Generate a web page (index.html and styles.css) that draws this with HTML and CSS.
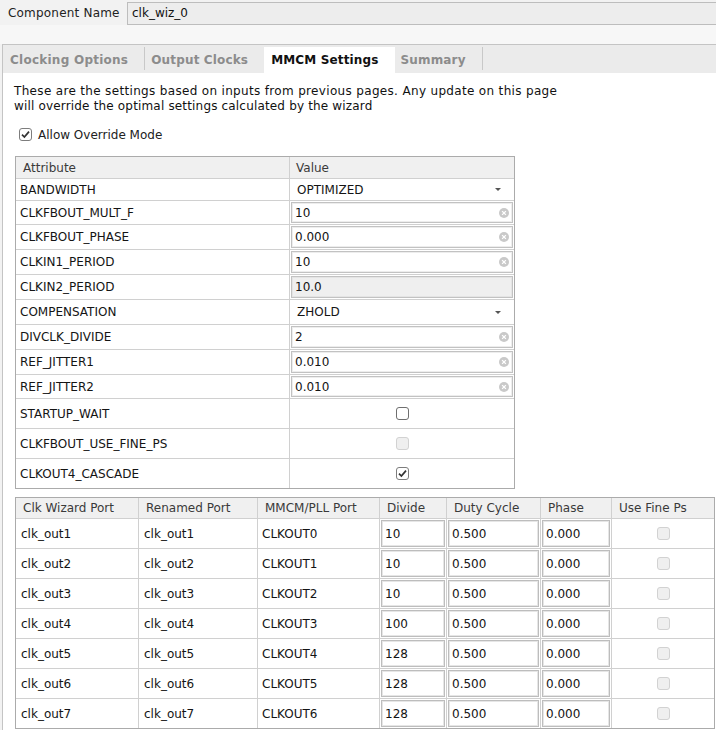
FILE: index.html
```html
<!DOCTYPE html>
<html>
<head>
<meta charset="utf-8">
<title>clk_wiz_0 - MMCM Settings</title>
<link rel="stylesheet" href="styles.css">
</head>
<body>
<div class="namebar">
  <span class="name-label">Component Name</span>
  <div class="name-input">clk_wiz_0</div>
</div>
<div class="band"></div>
<div class="pane">
  <div class="tabs">
    <div class="tab first">Clocking Options</div>
    <span class="tsep"></span>
    <div class="tab">Output Clocks</div>
    <div class="tab active">MMCM Settings</div>
    <div class="tab">Summary</div>
    <span class="tsep"></span>
  </div>
  <div class="panel">
    <p class="intro"><span class="l1">These are the settings based on inputs from previous pages. Any update on this page</span><br><span class="l2">will override the optimal settings calculated by the wizard</span></p>
    <label class="override">
      <svg class="cb" width="13" height="13" viewBox="0 0 13 13"><rect x="0.5" y="0.5" width="12" height="12" rx="2.5" fill="#fff" stroke="#7d7d7d"/><path d="M3 6.6l2.4 2.4 4.6-5.4" fill="none" stroke="#333" stroke-width="1.7"/></svg>
      <span>Allow Override Mode</span>
    </label>

    <div class="attr">
      <div class="arow head"><div class="ac1">Attribute</div><div class="ac2 hv">Value</div></div>
      <div class="arow h22"><div class="ac1">BANDWIDTH</div><div class="ac2"><div class="combo"><span>OPTIMIZED</span><span class="arrow"></span></div></div></div>
      <div class="arow h24"><div class="ac1">CLKFBOUT_MULT_F</div><div class="ac2"><div class="inp"><span>10</span><svg class="clr" width="10" height="10" viewBox="0 0 10 10"><circle cx="5" cy="5" r="5" fill="#c9c9c9"/><path d="M3.1 3.1l3.8 3.8M6.9 3.1l-3.8 3.8" stroke="#fff" stroke-width="1.3"/></svg></div></div></div>
      <div class="arow h25"><div class="ac1">CLKFBOUT_PHASE</div><div class="ac2"><div class="inp"><span>0.000</span><svg class="clr" width="10" height="10" viewBox="0 0 10 10"><circle cx="5" cy="5" r="5" fill="#c9c9c9"/><path d="M3.1 3.1l3.8 3.8M6.9 3.1l-3.8 3.8" stroke="#fff" stroke-width="1.3"/></svg></div></div></div>
      <div class="arow h25"><div class="ac1">CLKIN1_PERIOD</div><div class="ac2"><div class="inp"><span>10</span><svg class="clr" width="10" height="10" viewBox="0 0 10 10"><circle cx="5" cy="5" r="5" fill="#c9c9c9"/><path d="M3.1 3.1l3.8 3.8M6.9 3.1l-3.8 3.8" stroke="#fff" stroke-width="1.3"/></svg></div></div></div>
      <div class="arow h25"><div class="ac1">CLKIN2_PERIOD</div><div class="ac2"><div class="inp dis"><span>10.0</span></div></div></div>
      <div class="arow h25"><div class="ac1">COMPENSATION</div><div class="ac2"><div class="combo"><span>ZHOLD</span><span class="arrow"></span></div></div></div>
      <div class="arow h25"><div class="ac1">DIVCLK_DIVIDE</div><div class="ac2"><div class="inp"><span>2</span><svg class="clr" width="10" height="10" viewBox="0 0 10 10"><circle cx="5" cy="5" r="5" fill="#c9c9c9"/><path d="M3.1 3.1l3.8 3.8M6.9 3.1l-3.8 3.8" stroke="#fff" stroke-width="1.3"/></svg></div></div></div>
      <div class="arow h25"><div class="ac1">REF_JITTER1</div><div class="ac2"><div class="inp"><span>0.010</span><svg class="clr" width="10" height="10" viewBox="0 0 10 10"><circle cx="5" cy="5" r="5" fill="#c9c9c9"/><path d="M3.1 3.1l3.8 3.8M6.9 3.1l-3.8 3.8" stroke="#fff" stroke-width="1.3"/></svg></div></div></div>
      <div class="arow h24"><div class="ac1">REF_JITTER2</div><div class="ac2"><div class="inp"><span>0.010</span><svg class="clr" width="10" height="10" viewBox="0 0 10 10"><circle cx="5" cy="5" r="5" fill="#c9c9c9"/><path d="M3.1 3.1l3.8 3.8M6.9 3.1l-3.8 3.8" stroke="#fff" stroke-width="1.3"/></svg></div></div></div>
      <div class="arow h30"><div class="ac1">STARTUP_WAIT</div><div class="ac2 center"><svg class="cb" width="13" height="13" viewBox="0 0 13 13"><rect x="0.5" y="0.5" width="12" height="12" rx="2.5" fill="#fff" stroke="#6f6f6f"/></svg></div></div>
      <div class="arow h30"><div class="ac1">CLKFBOUT_USE_FINE_PS</div><div class="ac2 center"><svg class="cb" width="13" height="13" viewBox="0 0 13 13"><rect x="0.5" y="0.5" width="12" height="12" rx="2.5" fill="#efefef" stroke="#d2d2d2"/></svg></div></div>
      <div class="arow h29 last"><div class="ac1">CLKOUT4_CASCADE</div><div class="ac2 center"><svg class="cb" width="13" height="13" viewBox="0 0 13 13"><rect x="0.5" y="0.5" width="12" height="12" rx="2.5" fill="#fff" stroke="#7d7d7d"/><path d="M3 6.6l2.4 2.4 4.6-5.4" fill="none" stroke="#333" stroke-width="1.7"/></svg></div></div>
    </div>

    <div class="ports">
      <div class="prow head">
        <div class="pc">Clk Wizard Port</div><div class="pc">Renamed Port</div><div class="pc">MMCM/PLL Port</div><div class="pc">Divide</div><div class="pc">Duty Cycle</div><div class="pc">Phase</div><div class="pc">Use Fine Ps</div>
      </div>
      <div class="prow">
        <div class="pc t">clk_out1</div><div class="pc t">clk_out1</div><div class="pc t">CLKOUT0</div>
        <div class="pc f"><div class="pinp">10</div></div><div class="pc f"><div class="pinp">0.500</div></div><div class="pc f"><div class="pinp">0.000</div></div>
        <div class="pc center"><span class="dcb"></span></div>
      </div>
      <div class="prow">
        <div class="pc t">clk_out2</div><div class="pc t">clk_out2</div><div class="pc t">CLKOUT1</div>
        <div class="pc f"><div class="pinp">10</div></div><div class="pc f"><div class="pinp">0.500</div></div><div class="pc f"><div class="pinp">0.000</div></div>
        <div class="pc center"><span class="dcb"></span></div>
      </div>
      <div class="prow">
        <div class="pc t">clk_out3</div><div class="pc t">clk_out3</div><div class="pc t">CLKOUT2</div>
        <div class="pc f"><div class="pinp">10</div></div><div class="pc f"><div class="pinp">0.500</div></div><div class="pc f"><div class="pinp">0.000</div></div>
        <div class="pc center"><span class="dcb"></span></div>
      </div>
      <div class="prow">
        <div class="pc t">clk_out4</div><div class="pc t">clk_out4</div><div class="pc t">CLKOUT3</div>
        <div class="pc f"><div class="pinp">100</div></div><div class="pc f"><div class="pinp">0.500</div></div><div class="pc f"><div class="pinp">0.000</div></div>
        <div class="pc center"><span class="dcb"></span></div>
      </div>
      <div class="prow">
        <div class="pc t">clk_out5</div><div class="pc t">clk_out5</div><div class="pc t">CLKOUT4</div>
        <div class="pc f"><div class="pinp">128</div></div><div class="pc f"><div class="pinp">0.500</div></div><div class="pc f"><div class="pinp">0.000</div></div>
        <div class="pc center"><span class="dcb"></span></div>
      </div>
      <div class="prow">
        <div class="pc t">clk_out6</div><div class="pc t">clk_out6</div><div class="pc t">CLKOUT5</div>
        <div class="pc f"><div class="pinp">128</div></div><div class="pc f"><div class="pinp">0.500</div></div><div class="pc f"><div class="pinp">0.000</div></div>
        <div class="pc center"><span class="dcb"></span></div>
      </div>
      <div class="prow last">
        <div class="pc t">clk_out7</div><div class="pc t">clk_out7</div><div class="pc t">CLKOUT6</div>
        <div class="pc f"><div class="pinp">128</div></div><div class="pc f"><div class="pinp">0.500</div></div><div class="pc f"><div class="pinp">0.000</div></div>
        <div class="pc center"><span class="dcb"></span></div>
      </div>
    </div>
  </div>
</div>
</body>
</html>
```

FILE: styles.css
```css
* { box-sizing: border-box; }
html, body { height: 100%; }
body {
  margin: 0;
  background: #f2f2f2;
  font-family: "DejaVu Sans", "Noto Sans", sans-serif;
  font-size: 12px;
  color: #141414;
  overflow: hidden;
}

/* component name bar */
.namebar {
  height: 25px;
  display: flex;
  align-items: flex-start;
  padding-top: 2px;
}
.name-label {
  width: 127px;
  padding-left: 8px;
  line-height: 22px;
  color: #222;
  letter-spacing: 0.2px;
}
.name-input {
  flex: 1;
  height: 23px;
  border: 1px solid #bdbdbd;
  border-right: none;
  background: #ededed;
  padding-left: 4px;
  line-height: 21px;
  color: #111;
}
.band {
  height: 19px;
  background: #f7f7f7;
}

/* tab pane */
.pane {
  margin-left: 2px;
  border-left: 1px solid #c4c4c4;
  border-top: 1px solid #c4c4c4;
  background: #fff;
  height: 700px;
}
.tabs {
  display: flex;
  align-items: flex-end;
  height: 28px;
  background: #ebebeb;
}
.tab {
  height: 26px;
  padding: 0 16px 0 6px;
  font-weight: bold;
  color: #8c8c8c;
  line-height: 26px;
  white-space: nowrap;
  letter-spacing: 0.15px;
}
.tab.first { padding-left: 7px; letter-spacing: 0.25px; }
.tab.active {
  background: #fff;
  color: #111;
  padding-left: 7px;
}
.tsep {
  width: 1px;
  height: 23px;
  margin-bottom: 3px;
  background: #c8c8c8;
}

.panel {
  padding: 11px 0 0 11px;
}
.intro {
  margin: 0;
  line-height: 15px;
  color: #111;
  white-space: nowrap;
}
.intro .l1 { letter-spacing: 0.33px; }
.intro .l2 { letter-spacing: 0.17px; }
.override {
  display: flex;
  align-items: center;
  gap: 6px;
  height: 15px;
  margin: 13px 0 0 5px;
  color: #222;
}
.cb { display: block; }

/* attribute table */
.attr {
  margin: 14px 0 0 1px;
  width: 500px;
  border: 1px solid #ababab;
  background: #fff;
}
.arow {
  display: grid;
  grid-template-columns: 274px 1fr;
  border-bottom: 1px solid #d0d0d0;
}
.arow.last { border-bottom: none; }
.arow.head { height: 22px; background: #f0f0f0; color: #3a3a3a; }
.h22 { height: 22px; }
.h24 { height: 24px; }
.h25 { height: 25px; }
.h29 { height: 29px; }
.h30 { height: 30px; }
.ac1 {
  border-right: 1px solid #d0d0d0;
  padding-left: 4px;
  display: flex;
  align-items: center;
}
.arow.head .ac1 { padding-left: 7px; }
.ac2 {
  padding: 1px 1px 1px 1px;
  display: flex;
  align-items: stretch;
}
.ac2.hv { padding-left: 6px; align-items: center; }
.ac2.center { justify-content: center; align-items: center; }

.inp {
  flex: 1;
  display: flex;
  align-items: center;
  justify-content: space-between;
  border: 1px solid #c2c2c2;
  box-shadow: inset 0 0 0 1px #ededed;
  padding: 0 3px 0 3px;
  background: #fff;
}
.inp.dis { background: #efefef; box-shadow: inset 0 0 0 1px #e4e4e4; }
.clr { display: block; }
.combo {
  flex: 1;
  display: flex;
  align-items: center;
  justify-content: space-between;
  padding: 0 12px 0 6px;
}
.arrow {
  width: 0;
  height: 0;
  border-left: 3px solid transparent;
  border-right: 3px solid transparent;
  border-top: 3px solid #555;
}

/* ports table */
.ports {
  margin: 8px 0 0 1px;
  width: 700px;
  border: 1px solid #ababab;
  background: #fff;
}
.prow {
  display: grid;
  grid-template-columns: 123px 119px 122px 67px 94px 71px 1fr;
  height: 30px;
  border-bottom: 1px solid #d0d0d0;
}
.prow.head { height: 21px; background: #f0f0f0; color: #3a3a3a; }
.prow.last { height: 29px; border-bottom: none; }
.pc {
  border-right: 1px solid #d0d0d0;
  display: flex;
  align-items: center;
  padding-left: 7px;
  white-space: nowrap;
}
.pc:last-child { border-right: none; }
.pc.t { padding-left: 5px; }
.prow .pc.t:nth-child(3) { padding-left: 4px; }
.pc.f { padding: 1px; align-items: stretch; }
.pc.center { justify-content: center; padding-left: 0; }
.pinp {
  flex: 1;
  display: flex;
  align-items: center;
  border: 1px solid #bdbdbd;
  box-shadow: inset 0 0 0 1px #e6e6e6;
  padding-left: 3px;
  background: #fff;
}
.dcb {
  width: 13px;
  height: 13px;
  border: 1px solid #d2d2d2;
  border-radius: 3px;
  background: #efefef;
}
```
